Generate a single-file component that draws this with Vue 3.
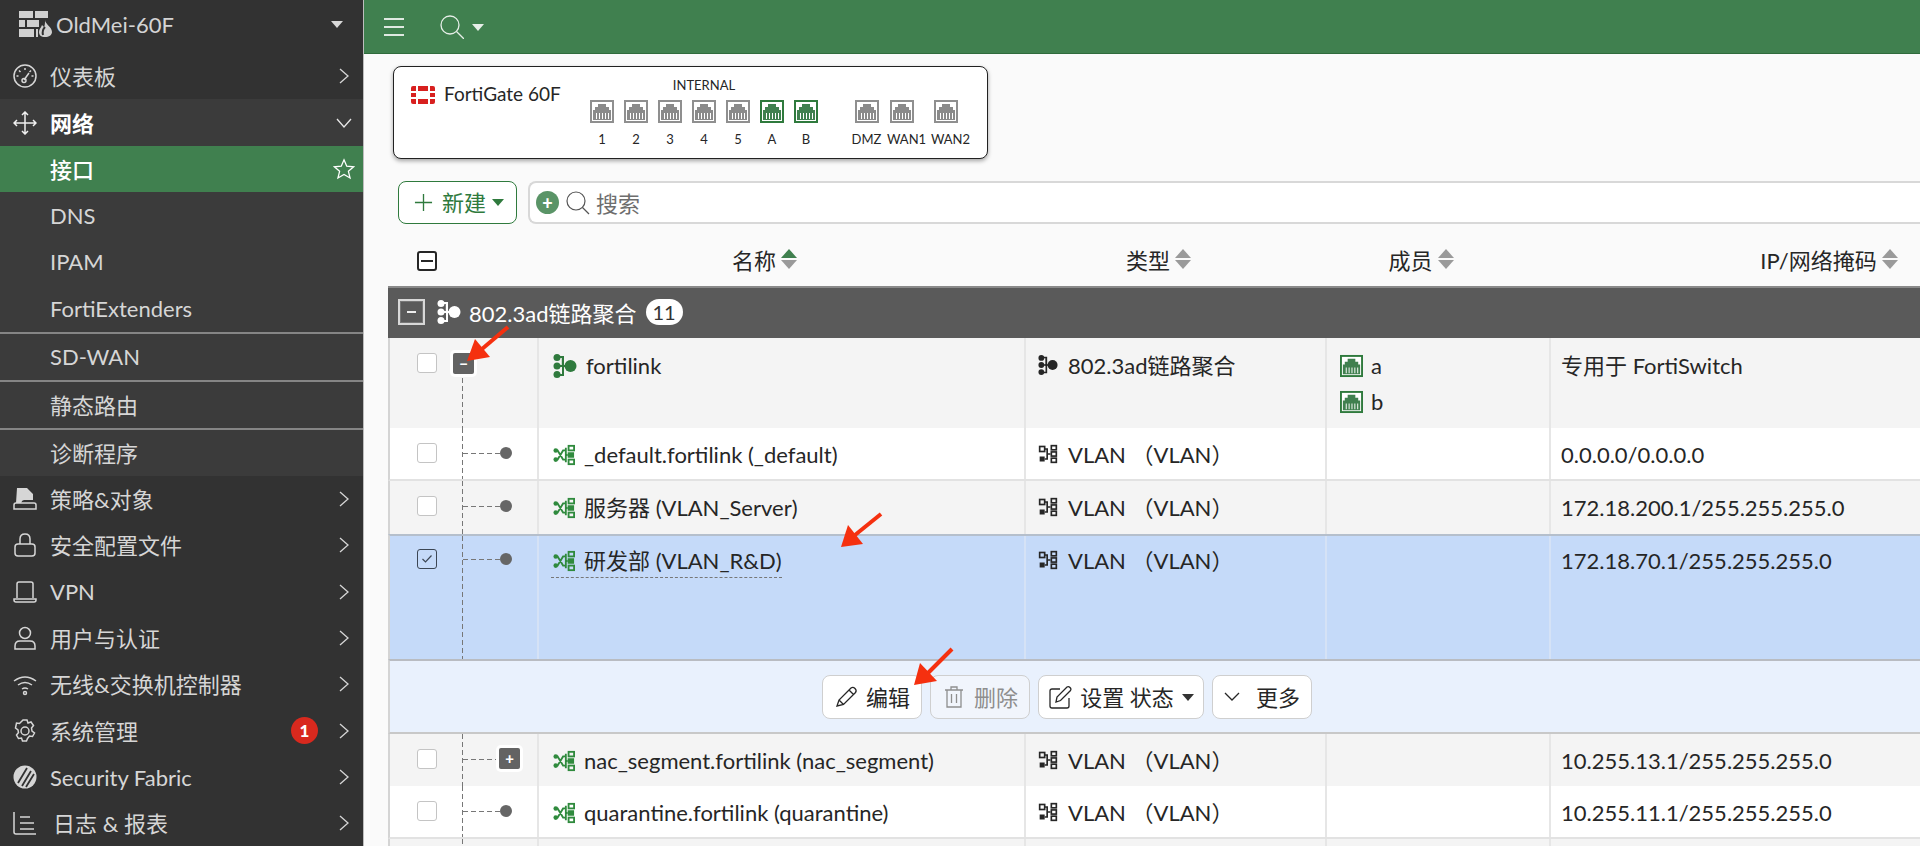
<template>
  <div class="page">
    <aside class="side">
      <div class="brand">
        <svg class="brand-logo" viewBox="0 0 33 26">
          <path d="M0 0h14v7H0zM16 0h13v7H16zM0 9h6v7H0zM8 9h12v7H8zM0 18h15v8H0zM17 18h2v8h-2z" fill="#d0d0d0" />
          <path d="M26 9c0 4 7 7 7 12 0 3-3 5-7 5s-6-2-6-5c0-3 2-4 3-7l2 2c1-2 1-4 1-7z" fill="#d0d0d0" />
          <path d="M26 16c-2 2-3 4-2 8" fill="none" stroke="#323232" stroke-width="2" />
        </svg>
        <span class="brand-name">OldMei-60F</span>
        <i class="caret brand-caret"></i>
      </div>

      <div v-for="item in menuTop" :key="item.label" class="menu-item">
        <svg class="menu-icon" viewBox="0 0 24 24" v-html="icons[item.icon]"></svg>
        <span :class="{ cjk: isCjk(item.label) }">{{ item.label }}</span>
        <svg class="chev" viewBox="0 0 10 16"><path d="M1 1l8 7-8 7" /></svg>
      </div>

      <div class="open-group">
        <div class="menu-item open-head">
          <svg class="menu-icon" viewBox="0 0 24 24" v-html="icons.move"></svg>
          <span class="cjk">网络</span>
          <svg class="chev-down" viewBox="0 0 16 10"><path d="M1 1l7 8 7-8" /></svg>
        </div>
        <div class="sub-item active">
          <span class="cjk">接口</span>
          <svg class="star" viewBox="0 0 24 24"><path d="M12 2l3 7 7.5.6-5.7 4.900 1.800 7.300L12 17.900 5.400 21.800l1.800-7.300L1.500 9.600 9 9z" /></svg>
        </div>
        <div v-for="sub in subItems" :key="sub.label" class="sub-item" :class="{ ruled: sub.ruled }">
          <span :class="{ cjk: isCjk(sub.label) }">{{ sub.label }}</span>
        </div>
      </div>

      <div v-for="item in menuBottom" :key="item.label" class="menu-item">
        <svg class="menu-icon" viewBox="0 0 24 24" v-html="icons[item.icon]"></svg>
        <span :class="{ wide: item.wide, cjk: isCjk(item.label) }">{{ item.label }}</span>
        <b v-if="item.badge" class="alert">{{ item.badge }}</b>
        <svg class="chev" viewBox="0 0 10 16"><path d="M1 1l8 7-8 7" /></svg>
      </div>
    </aside>

    <main class="main">
      <header class="topbar">
        <div class="burger"><i></i><i></i><i></i></div>
        <svg class="top-search" viewBox="0 0 24 24"><circle cx="10" cy="10" r="9" /><path d="M16.5 16.5L24 24" /></svg>
        <i class="caret top-caret"></i>
      </header>

      <section class="faceplate">
        <div class="fp-brand">
          <svg class="fp-logo" viewBox="0 0 24 18">
            <path d="M0 5V2q0-2 2-2h3v5zM7 0h10v5H7zM19 0h3q2 0 2 2v3h-5zM0 7h5v4H0zM19 7h5v4h-5zM0 13h5v5H2q-2 0-2-2zM7 13h10v5H7zM19 13h5v3q0 2-2 2h-3z" fill="#d8201f" />
          </svg>
          <span>FortiGate 60F</span>
        </div>
        <div class="fp-ports">
          <div class="fp-title">INTERNAL</div>
          <div class="port-row">
            <div v-for="p in internalPorts" :key="p.label" class="port-col">
              <svg class="port" :class="{ up: p.up }" viewBox="0 0 24 23">
                <rect x="1" y="1" width="22" height="21" />
                <path :d="portGlyph" />
              </svg>
              <span>{{ p.label }}</span>
            </div>
          </div>
        </div>
        <div class="wan-row">
          <div v-for="p in wanPorts" :key="p" class="port-col wan">
            <svg class="port" viewBox="0 0 24 23">
              <rect x="1" y="1" width="22" height="21" />
              <path :d="portGlyph" />
            </svg>
            <span>{{ p }}</span>
          </div>
        </div>
      </section>

      <div class="toolbar">
        <button class="btn-new">
          <svg viewBox="0 0 20 20"><path d="M10 1v18M1 10h18" /></svg>
          <span>新建</span>
          <i class="caret green-caret"></i>
        </button>
        <div class="search-box">
          <span class="add-filter">+</span>
          <svg class="search-glass" viewBox="0 0 24 24"><circle cx="10" cy="10" r="9" /><path d="M16.5 16.5L23 23" /></svg>
          <span class="placeholder">搜索</span>
        </div>
      </div>

      <div class="table">
        <div class="thead cols">
          <div class="th-check"><span class="box minus"></span></div>
          <div v-for="(h, i) in heads" :key="h" class="th">
            <span>{{ h }}</span>
            <span class="sort" :class="{ asc: i === 0 }"><i></i><i></i></span>
          </div>
        </div>

        <div class="group-bar">
          <span class="group-toggle"><i></i></span>
          <svg class="ic-agg" viewBox="0 0 24 24" v-html="icons.agg"></svg>
          <span class="group-name">802.3ad链路聚合</span>
          <span class="count">11</span>
        </div>

        <template v-for="row in rows" :key="row.id">
          <div v-if="row.actions" class="actions">
            <button class="act">
              <svg viewBox="0 0 24 24"><path d="M3 21l2-6L17 3q2-1.5 4 .5t.5 4L9.5 19.5zM5 15l4.500 4.500M15 5l4.500 4.500" /></svg>
              <span>编辑</span>
            </button>
            <button class="act off">
              <svg viewBox="0 0 24 24"><path d="M3 5h18M9 5V2h6v3M5 5v17h14V5M9.500 9v9M14.500 9v9" /></svg>
              <span>删除</span>
            </button>
            <button class="act state">
              <svg viewBox="0 0 24 24"><path d="M12 4H4q-2 0-2 2v15q0 2 2 2h15q2 0 2-2v-8M8 17l1-5L19 2q1.500-1 3 .5t.5 3L12.500 15.500z" /></svg>
              <span>设置 状态</span>
              <i class="caret dark-caret"></i>
            </button>
            <button class="act more">
              <svg class="more-chev" viewBox="0 0 16 10"><path d="M1 1l7 7 7-7" /></svg>
              <span>更多</span>
            </button>
          </div>
          <div v-else class="row cols" :class="[row.kind, { 'root-row': row.tree === 'root' }]" :style="{ height: row.height + 'px' }">
            <div class="tree-cell" :class="{ root: row.tree === 'root' }">
              <template v-if="row.id !== 'tail'">
                <span class="box" :class="{ checked: row.kind === 'sel' }">
                  <svg v-if="row.kind === 'sel'" viewBox="0 0 12 10"><path d="M1.500 5l3 3 6-6.500" /></svg>
                </span>
                <span v-if="row.tree === 'root'" class="expander"><i>−</i></span>
                <template v-else>
                  <span class="link" :class="{ short: row.tree === 'plus' }"></span>
                  <span v-if="row.tree === 'plus'" class="expander plus"><i>+</i></span>
                  <span v-else class="dot"></span>
                </template>
              </template>
            </div>
            <div class="cell">
              <span v-if="row.name" class="name" :class="{ under: row.kind === 'sel' }">
                <svg v-if="row.tree === 'root'" class="ic-agg green" viewBox="0 0 24 24" v-html="icons.agg"></svg>
                <svg v-else class="ic-vlan green" viewBox="0 0 24 24" v-html="icons.vlanName"></svg>
                <span>{{ row.name }}</span>
              </span>
            </div>
            <div class="cell type-cell">
              <template v-if="row.type">
                <svg v-if="row.tree === 'root'" class="ic-agg dark" viewBox="0 0 24 24" v-html="icons.agg"></svg>
                <svg v-else class="ic-vlan dark" viewBox="0 0 24 24" v-html="icons.vlanType"></svg>
                <span>{{ row.type }}</span>
              </template>
            </div>
            <div class="cell member-cell">
              <div v-for="m in row.members" :key="m" class="member">
                <svg class="port up small" viewBox="0 0 24 23">
                  <rect x="1" y="1" width="22" height="21" />
                  <path :d="portGlyph" />
                </svg>
                <span>{{ m }}</span>
              </div>
            </div>
            <div class="cell">{{ row.ip }}</div>
          </div>
        </template>
      </div>
    </main>

    <svg class="marks" viewBox="0 0 1920 846">
      <g v-for="m in arrows" :key="m.id">
        <path :d="m.shaft" class="mark-line" />
        <path :d="m.head" class="mark-head" />
      </g>
    </svg>
  </div>
</template>

<script setup>
const icons = {
  gauge: '<circle cx="12" cy="12" r="11"/><path d="M12 4v2M6 6.5l1.500 1.500M3.500 12h2M20.500 12h-2M18 6.500 16.500 8M11 16l5-7"/><circle cx="11" cy="16.500" r="2"/>',
  move: '<path d="M12 1v22M1 12h22M9 4l3-3 3 3M9 20l3 3 3-3M4 9l-3 3 3 3M20 9l3 3-3 3"/>',
  policy: '<path class="fill" d="M4 1h10l6 6v6h-9q-2 0-3 3H3z"/><path d="M3 16h18q2 0 2 2v4H1v-4q0-2 2-2z"/>',
  lock: '<rect x="2" y="11" width="20" height="12" rx="3"/><path d="M7 11V6q0-5 5-5t5 5v5"/>',
  laptop: '<path d="M4 18V4q0-2 2-2h12q2 0 2 2v14M1 19h22v1q0 2-2 2H3q-2 0-2-2z"/>',
  user: '<circle cx="12" cy="7" r="5.500"/><path d="M2 23v-3q0-5 5-5h10q5 0 5 5v3z"/>',
  wifi: '<path d="M1 9q11-8 22 0M5 13q7-5 14 0M9 17q3-2 6 0"/><circle cx="12" cy="21" r="1.500"/>',
  gear: '<path d="M10 1h4l1 3 3-1 2.500 3.500-2 2.500.5 3 2.500 2-2 3.500-3-.5-2 2.500-1 2.500h-4l-1-3-3 .5-2-3.500 2-2.500-.5-2.500-2.500-2L3.500 4l3 .5z"/><circle cx="12" cy="12" r="4"/>',
  fabric: '<circle class="fill" cx="12" cy="12" r="11.500"/><path class="cut" d="M5 18 14 3M9 21 18 6M13 22 21 9"/>',
  logs: '<path d="M1 1v20q0 2 2 2h20M7 6h10M7 12h14M7 18h14"/>',
  agg: '<circle cx="17.500" cy="12" r="6"/><circle cx="4" cy="3.500" r="3.500"/><circle cx="4" cy="12" r="3.500"/><circle cx="4" cy="20.500" r="3.500"/><path d="M4 2h7v20H4v-2h5v-7H4v-2h4.800V4H4z"/><path d="M9 11h6v2H9z"/>',
  vlanName: '<path class="thin" d="M3 7h2l6 10h3M3 17h2l6-10h3"/><circle class="solid" cx="3" cy="7" r="2.500"/><circle class="solid" cx="3" cy="17" r="2.500"/><path class="thin" d="M14 4v16M14 12h2"/><rect class="thin" x="17" y="2" width="6" height="5"/><rect class="solid" x="16" y="9" width="7" height="6"/><rect class="thin" x="17" y="17" width="6" height="5"/>',
  vlanType: '<path class="thin" d="M8 6h3v12H8M11 12h4"/><rect class="thin" x="2" y="3" width="6" height="6"/><rect class="solid" x="2" y="15" width="6" height="6"/><rect class="thin" x="16" y="2" width="6" height="5"/><rect class="thin" x="16" y="9.500" width="6" height="5"/><rect class="thin" x="16" y="17" width="6" height="5"/>'
}

const portGlyph = 'M8 4h8v3h3v3h2v10H3V10h2V7h3zM6 13v6h1v-6zM9 13v6h1v-6zM12 13v6h1v-6zM15 13v6h1v-6zM18 13v6h1v-6z'

// 中文字形比拉丁字母偏低，菜单里单独上提
const isCjk = (text) => /[\u4e00-\u9fff]/.test(text)

const menuTop = [{ label: '仪表板', icon: 'gauge' }]

const subItems = [
  { label: 'DNS' },
  { label: 'IPAM' },
  { label: 'FortiExtenders' },
  { label: 'SD-WAN', ruled: true },
  { label: '静态路由', ruled: true },
  { label: '诊断程序', ruled: true }
]

const menuBottom = [
  { label: '策略&对象', icon: 'policy' },
  { label: '安全配置文件', icon: 'lock' },
  { label: 'VPN', icon: 'laptop' },
  { label: '用户与认证', icon: 'user' },
  { label: '无线&交换机控制器', icon: 'wifi' },
  { label: '系统管理', icon: 'gear', badge: 1 },
  { label: 'Security Fabric', icon: 'fabric' },
  { label: '日志 & 报表', icon: 'logs', wide: true }
]

const internalPorts = [
  { label: '1' }, { label: '2' }, { label: '3' }, { label: '4' }, { label: '5' },
  { label: 'A', up: true }, { label: 'B', up: true }
]
const wanPorts = ['DMZ', 'WAN1', 'WAN2']

const heads = ['名称', '类型', '成员', 'IP/网络掩码']

const vlanType = 'VLAN （VLAN）'
const rows = [
  { id: 'fortilink', kind: 'alt', height: 90, tree: 'root', name: 'fortilink', type: '802.3ad链路聚合', members: ['a', 'b'], ip: '专用于 FortiSwitch' },
  { id: 'default', kind: 'plain', height: 53, tree: 'dot', name: '_default.fortilink (_default)', type: vlanType, ip: '0.0.0.0/0.0.0.0' },
  { id: 'server', kind: 'alt', height: 53, tree: 'dot', name: '服务器 (VLAN_Server)', type: vlanType, ip: '172.18.200.1/255.255.255.0' },
  { id: 'rd', kind: 'sel', height: 125, tree: 'dot', name: '研发部 (VLAN_R&D)', type: vlanType, ip: '172.18.70.1/255.255.255.0' },
  { id: 'actions', actions: true },
  { id: 'nac', kind: 'alt', height: 52, tree: 'plus', name: 'nac_segment.fortilink (nac_segment)', type: vlanType, ip: '10.255.13.1/255.255.255.0' },
  { id: 'quarantine', kind: 'plain', height: 53, tree: 'dot', name: 'quarantine.fortilink (quarantine)', type: vlanType, ip: '10.255.11.1/255.255.255.0' },
  { id: 'tail', kind: 'alt', height: 20, tree: 'dot' }
]

// 红色标注箭头
const arrows = [
  { id: 1, shaft: 'M508 327L482 349', head: 'M467 361L475 339L490 357z' },
  { id: 2, shaft: 'M881 514L855 535', head: 'M841 547L848 525L863 544z' },
  { id: 3, shaft: 'M952 649L928 673', head: 'M914 685L920 663L937 681z' }
]
</script>

<style>
html, body {
  margin: 0;
  background: #fafafa;
}
</style>

<style scoped>
.page {
  position: relative;
  display: flex;
  width: 1920px;
  height: 846px;
  overflow: hidden;
  font-family: Lato, "Noto Sans CJK SC", sans-serif;
  font-size: 22px;
  color: #262626;
}

/* 侧边栏 */
.side {
  flex: 0 0 363px;
  background: #323232;
  color: #d6d6d6;
  border-right: 1px solid #bdbdbd;
}
.brand {
  display: flex;
  align-items: center;
  height: 53px;
  padding: 0 0 5px 19px;
  box-sizing: border-box;
}
.brand-logo {
  flex: none;
  width: 33px;
  height: 26px;
  margin-right: 4px;
}
.brand-name {
  color: #d4d4d4;
}
.brand-caret {
  margin-left: auto;
  margin-right: 20px;
}
.caret {
  display: block;
  flex: none;
  width: 0;
  height: 0;
  border-left: 6px solid transparent;
  border-right: 6px solid transparent;
  border-top: 7px solid #d8d8d8;
}
.menu-item {
  display: flex;
  align-items: center;
  height: 46.4px;
  padding-left: 13px;
  box-sizing: border-box;
}
.menu-item > span {
  margin-left: 13px;
}
.menu-item > span.wide {
  margin-left: 16px;
}
.cjk {
  margin-bottom: 2px;
}
.menu-icon {
  flex: none;
  width: 24px;
  height: 24px;
  fill: none;
  stroke: #d6d6d6;
  stroke-width: 1.5;
}
.menu-icon :deep(.fill) {
  fill: #d6d6d6;
  stroke: none;
}
.menu-icon :deep(.cut) {
  stroke: #323232;
  stroke-width: 1.8;
}
.chev {
  width: 10px;
  height: 16px;
  margin-left: auto;
  margin-right: 14px;
  fill: none;
  stroke: #d6d6d6;
  stroke-width: 1.3;
}
.chev-down {
  width: 16px;
  height: 10px;
  margin-left: auto;
  margin-right: 11px;
  fill: none;
  stroke: #e8e8e8;
  stroke-width: 1.3;
}
.open-group {
  background: #3b3b3b;
}
.open-head {
  height: 46.6px;
  color: #fff;
  font-weight: 700;
}
.open-head .menu-icon {
  stroke: #f0f0f0;
}
.sub-item {
  display: flex;
  align-items: center;
  height: 46.4px;
  padding-left: 50px;
  box-sizing: border-box;
}
.sub-item.ruled {
  height: 48px;
  border-top: 2px solid #858585;
}
.sub-item.active {
  background: #40804f;
  color: #fff;
  font-weight: 500;
}
.star {
  width: 22px;
  height: 22px;
  margin-left: auto;
  margin-right: 8px;
  fill: none;
  stroke: #fff;
  stroke-width: 1.4;
}
.alert {
  display: flex;
  align-items: center;
  justify-content: center;
  width: 27px;
  height: 27px;
  margin-left: auto;
  margin-right: -5px;
  border-radius: 50%;
  background: #d8291e;
  color: #fff;
  font-size: 17px;
  font-weight: 900;
}
.alert + .chev {
  margin-left: 26px;
}

/* 主区域 */
.main {
  flex: 1;
  min-width: 0;
  background: #fafafa;
}
.topbar {
  display: flex;
  align-items: center;
  height: 54px;
  padding-left: 20px;
  box-sizing: border-box;
  background: #40804f;
  border-bottom: 1px solid #2f6b3c;
}
.burger {
  display: flex;
  flex-direction: column;
  gap: 6px;
  width: 20px;
}
.burger i {
  display: block;
  height: 2px;
  background: #dfe9e1;
}
.top-search {
  width: 24px;
  height: 24px;
  margin-left: 36px;
  fill: none;
  stroke: #e6eee8;
  stroke-width: 1.3;
}
.top-caret {
  margin-left: 8px;
  margin-top: 2px;
  border-top-color: #e6eee8;
}

/* 设备面板 */
.faceplate {
  display: flex;
  width: 595px;
  height: 93px;
  margin: 12px 0 0 29px;
  box-sizing: border-box;
  background: #fff;
  border: 1px solid #222;
  border-radius: 8px;
  box-shadow: 0 2px 4px rgba(0, 0, 0, 0.35);
}
.fp-brand {
  display: flex;
  align-items: flex-start;
  width: 191px;
  padding: 14px 0 0 17px;
  box-sizing: border-box;
  font-size: 19px;
  line-height: 26px;
  white-space: nowrap;
}
.fp-logo {
  flex: none;
  width: 24px;
  height: 18px;
  margin: 5px 9px 0 0;
}
.fp-title {
  font-size: 13px;
  line-height: 14px;
  margin-top: 11px;
  text-align: center;
  width: 238px;
}
.port-row {
  display: flex;
  margin-top: 8px;
}
.port-col {
  display: flex;
  flex-direction: column;
  align-items: center;
  width: 34px;
  font-size: 13px;
}
.port-col span {
  margin-top: 8px;
  line-height: 16px;
  white-space: nowrap;
}
.port {
  display: block;
  flex: none;
  width: 24px;
  height: 23px;
}
.port rect {
  fill: #fff;
  stroke: #8f8f8f;
  stroke-width: 2;
}
.port path {
  fill: #8a8a8a;
}
.port.up rect {
  stroke: #2f7a3d;
}
.port.up path {
  fill: #40804f;
}
.wan-row {
  display: flex;
  margin: 33px 0 0 26px;
}
.port-col.wan {
  width: 35px;
}
.port-col.wan:nth-child(n+2) span {
  margin-left: 10px;
}
.port-col.wan:nth-child(3) {
  width: 53px;
}

/* 工具栏 */
.toolbar {
  display: flex;
  gap: 11px;
  margin: 22px 0 0 34px;
  height: 43px;
}
.btn-new {
  display: flex;
  align-items: center;
  width: 119px;
  padding: 0 0 0 15px;
  box-sizing: border-box;
  background: #fff;
  border: 1px solid #2f7a3d;
  border-radius: 8px;
  color: #2f7a3d;
  font: inherit;
}
.btn-new svg {
  flex: none;
  width: 19px;
  height: 19px;
  fill: none;
  stroke: #2f7a3d;
  stroke-width: 1.4;
}
.btn-new span {
  margin: 0 0 4px 9px;
  white-space: nowrap;
}
.green-caret {
  margin-left: 6px;
  border-top-color: #2f7a3d;
}
.search-box {
  flex: 1;
  display: flex;
  align-items: center;
  padding-left: 6px;
  background: #fff;
  border: 2px solid #d8d8d8;
  border-right: 0;
  border-radius: 8px 0 0 8px;
}
.add-filter {
  display: flex;
  align-items: center;
  justify-content: center;
  width: 23px;
  height: 23px;
  border-radius: 50%;
  background: #5a9467;
  color: #fff;
  font-weight: 900;
  font-size: 18px;
  line-height: 1;
}
.search-glass {
  width: 24px;
  height: 24px;
  margin-left: 7px;
  fill: none;
  stroke: #555;
  stroke-width: 1.2;
}
.placeholder {
  margin: 0 0 2px 6px;
  color: #6e6e6e;
}

/* 表格 */
.table {
  margin: 15px 0 0 24px;
  width: 1532px;
}
.cols {
  display: grid;
  grid-template-columns: 147px 487px 301px 224px 592px;
  width: 1754px;
}
.thead {
  height: 47px;
  padding-bottom: 8px;
  box-sizing: border-box;
  align-items: center;
  grid-template-columns: 149px 487px 301px 224px 592px;
}
.th-check {
  padding-left: 29px;
}
.th {
  display: flex;
  align-items: center;
  justify-content: center;
  gap: 5px;
  padding-right: 32px;
  white-space: nowrap;
}
.sort {
  display: flex;
  flex-direction: column;
  gap: 2px;
}
.sort i {
  display: block;
  width: 0;
  height: 0;
  border-left: 8.5px solid transparent;
  border-right: 8.5px solid transparent;
  border-bottom: 9px solid #9a9a9a;
}
.sort i + i {
  border-bottom: 0;
  border-top: 9px solid #9a9a9a;
}
.sort.asc i:first-child {
  border-bottom-color: #40804f;
}
.box {
  display: inline-flex;
  align-items: center;
  justify-content: center;
  flex: none;
  width: 20px;
  height: 20px;
  box-sizing: border-box;
  background: #fff;
  border: 1px solid #c4c4c4;
  border-radius: 3px;
}
.box.minus {
  border: 2px solid #262626;
  vertical-align: middle;
}
.box.minus::after {
  content: "";
  width: 12px;
  height: 2px;
  background: #262626;
}
.box.checked {
  border-color: #3c4654;
  background: #c5daf9;
}
.box svg {
  width: 12px;
  height: 10px;
  fill: none;
  stroke: #3c4654;
  stroke-width: 1.2;
}
.group-bar {
  display: flex;
  align-items: center;
  width: 1754px;
  height: 52px;
  box-sizing: border-box;
  padding: 0 0 2px 10px;
  background: #5a5a5a;
  border-top: 2px solid #8a8a8a;
  color: #fff;
}
.group-toggle {
  display: flex;
  align-items: center;
  justify-content: center;
  width: 27px;
  height: 26px;
  box-sizing: border-box;
  background: #5a5a5a;
  border: 2px solid #d8d8d8;
  box-shadow: inset 0 0 0 1px #777;
}
.group-toggle i {
  display: block;
  width: 9px;
  height: 2px;
  background: #eee;
}
.ic-agg {
  flex: none;
  width: 24px;
  height: 24px;
}
.group-bar .ic-agg {
  margin-left: 12px;
  fill: #fff;
}
.group-name {
  margin-left: 8px;
}
.count {
  margin-left: 9px;
  width: 37px;
  height: 26px;
  border-radius: 13px;
  background: #fff;
  color: #333;
  font-size: 20px;
  line-height: 26px;
  text-align: center;
}
.ic-agg.green {
  fill: #2f7a3d;
}
.ic-agg.dark {
  fill: #262626;
}
.ic-vlan {
  flex: none;
  width: 22px;
  height: 22px;
}
.ic-vlan.green {
  stroke: #2f8a3d;
  fill: #2f8a3d;
}
.ic-vlan.dark {
  stroke: #262626;
  fill: #262626;
}
.ic-vlan :deep(.thin) {
  fill: none;
  stroke-width: 2;
}
.ic-vlan :deep(.solid) {
  stroke: none;
}

.row {
  box-sizing: border-box;
  border-left: 2px solid #d4d4d4;
}
.row.alt {
  background: #f4f4f4;
}
.row.plain {
  background: #fff;
  border-bottom: 2px solid #e2e2e2;
}
.row.sel {
  background: #c5daf9;
  border-top: 2px solid #b5bfcc;
}
.tree-cell {
  position: relative;
  display: flex;
  align-items: flex-start;
  padding: 15px 0 0 27px;
  box-sizing: border-box;
}
.row.sel .tree-cell {
  padding-top: 13px;
}
.tree-cell::before {
  content: "";
  position: absolute;
  left: 72px;
  top: 0;
  bottom: 0;
  width: 1px;
  background: repeating-linear-gradient(to bottom, #777 0 5px, transparent 5px 8px);
}
.tree-cell.root::before {
  top: 40px;
}
.link {
  width: 37px;
  height: 1px;
  margin: 10px 0 0 26px;
  background: repeating-linear-gradient(to right, #777 0 5px, transparent 5px 8px);
}
.link.short {
  width: 34px;
}
.dot {
  flex: none;
  width: 12px;
  height: 12px;
  margin-top: 4px;
  border-radius: 50%;
  background: #666;
}
.expander {
  position: relative;
  display: flex;
  align-items: center;
  justify-content: center;
  flex: none;
  width: 21px;
  height: 21px;
  margin-left: 16px;
  border-radius: 2px;
  background: #636363;
  box-shadow: 0 0 0 3px #fff;
  color: #fff;
  font-weight: 900;
  font-size: 15px;
}
.expander i {
  font-style: normal;
  line-height: 1;
}
.expander.plus {
  margin-left: 2px;
  margin-top: -1px;
}
.cell {
  padding: 13px 0 0 10px;
  border-left: 2px solid #e6e6e6;
  line-height: 28px;
  white-space: nowrap;
  overflow: hidden;
}
.row.sel .cell {
  padding-top: 11px;
  border-left-color: #d5e2f6;
}
.root-row .cell {
  padding-top: 14px;
}
.name {
  display: inline-flex;
  align-items: center;
  gap: 9px;
  padding: 0 0 2px 2px;
  margin-left: 2px;
}
.name.under {
  border-bottom: 1px dashed #777;
}
.type-cell {
  display: flex;
  align-items: flex-start;
  gap: 10px;
  padding-left: 12px;
}
.type-cell svg {
  width: 20px;
  height: 20px;
  margin-top: 3px;
}
.member-cell,
.root-row .member-cell {
  padding: 10px 0 0 13px;
}
.member {
  display: flex;
  align-items: center;
  gap: 8px;
  height: 36px;
}
.port.small {
  width: 23px;
  height: 24px;
}

/* 操作条 */
.actions {
  display: flex;
  gap: 8px;
  width: 1754px;
  height: 75px;
  padding: 14px 0 0 432px;
  box-sizing: border-box;
  background: #e9f1fd;
  border-top: 2px solid #b9bcc2;
  border-bottom: 2px solid #c8c8c8;
  border-left: 2px solid #d4d4d4;
}
.act {
  display: flex;
  align-items: center;
  justify-content: center;
  gap: 8px;
  width: 100px;
  height: 44px;
  padding: 0;
  background: #fff;
  border: 1px solid #cfcfcf;
  border-radius: 8px;
  font: inherit;
  color: #262626;
  white-space: nowrap;
}
.act span {
  margin-bottom: 2px;
}
.act svg {
  flex: none;
  width: 24px;
  height: 24px;
  fill: none;
  stroke: #262626;
  stroke-width: 1.3;
}
.act.off {
  background: #f1f5fc;
  color: #8e8e8e;
}
.act.off svg {
  stroke: #8e8e8e;
}
.act.state {
  width: 166px;
}
.dark-caret {
  border-top-color: #333;
}
.act.more svg.more-chev {
  width: 16px;
  height: 10px;
  margin-right: 8px;
}

/* 标注 */
.marks {
  position: absolute;
  left: 0;
  top: 0;
  width: 1920px;
  height: 846px;
  pointer-events: none;
}
.mark-line {
  fill: none;
  stroke: #f5300f;
  stroke-width: 4;
}
.mark-head {
  fill: #f5300f;
}
</style>
